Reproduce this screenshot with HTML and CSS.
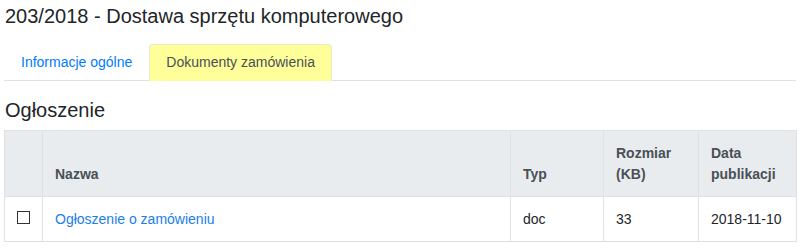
FILE: index.html
```html
<!DOCTYPE html>
<html lang="pl">
<head>
<meta charset="utf-8">
<title>203/2018 - Dostawa sprzętu komputerowego</title>
<link rel="stylesheet" href="styles.css">
</head>
<body>
<div class="page">
  <h1 class="title">203/2018 - Dostawa sprzętu komputerowego</h1>
  <nav class="tabs">
    <a class="tab" href="#">Informacje ogólne</a>
    <a class="tab tab-active" href="#">Dokumenty zamówienia</a>
  </nav>
  <h2 class="section">Ogłoszenie</h2>
  <table class="docs">
    <colgroup>
      <col class="c-check">
      <col class="c-name">
      <col class="c-type">
      <col class="c-size">
      <col class="c-date">
    </colgroup>
    <thead>
      <tr>
        <th></th>
        <th>Nazwa</th>
        <th>Typ</th>
        <th>Rozmiar (KB)</th>
        <th>Data publikacji</th>
      </tr>
    </thead>
    <tbody>
      <tr>
        <td><input class="check" type="checkbox"></td>
        <td><a class="link" href="#">Ogłoszenie o zamówieniu</a></td>
        <td>doc</td>
        <td>33</td>
        <td>2018-11-10</td>
      </tr>
    </tbody>
  </table>
</div>
</body>
</html>
```

FILE: styles.css
```css
* { box-sizing: border-box; }
html, body {
  margin: 0;
  padding: 0;
  background: #fff;
}
body {
  font-family: "Liberation Sans", Arial, sans-serif;
  color: #212529;
  font-size: 14px;
}
.page {
  width: 792px;
  margin-left: 4px;
}
.title {
  margin: 0;
  padding-top: 4px;
  font-size: 20px;
  line-height: 24px;
  font-weight: normal;
  color: #212529;
  padding-left: 1px;
}
.tabs {
  display: flex;
  margin-top: 16px;
  border-bottom: 1px solid #dee2e6;
}
.tab {
  display: block;
  padding: 8px 16px;
  line-height: 19px;
  font-size: 14px;
  border: 1px solid transparent;
  border-radius: 4px 4px 0 0;
  margin-bottom: -1px;
  color: #007bff;
  text-decoration: none;
}
.tab-active {
  background: #ffff99;
  color: #495057;
  border-color: #e9e9c8 #e9e9c8 #ffff99;
}
.section {
  margin: 17px 0 8px;
  font-size: 20px;
  line-height: 24px;
  font-weight: normal;
  color: #212529;
  padding-left: 1px;
}
.docs {
  width: 792px;
  table-layout: fixed;
  border-collapse: collapse;
  border: 1px solid #dee2e6;
  font-size: 14px;
  line-height: 21px;
}
.c-check { width: 38px; }
.c-name { width: 468px; }
.c-type { width: 93px; }
.c-size { width: 95px; }
.c-date { width: 98px; }
.docs th,
.docs td {
  padding: 12px;
  border: 1px solid #dee2e6;
  text-align: left;
}
.docs th {
  padding-bottom: 11px;
  background: #e9ecef;
  color: #495057;
  font-weight: bold;
  vertical-align: bottom;
}
.docs td {
  padding-bottom: 11px;
  vertical-align: top;
  color: #212529;
}
.check {
  appearance: none;
  -webkit-appearance: none;
  display: block;
  width: 13px;
  height: 13px;
  margin: 2px 0 0 0;
  border: 1px solid #333;
  background: #fff;
  border-radius: 0;
}
.link {
  color: #1a7ee8;
  text-decoration: none;
}
```
